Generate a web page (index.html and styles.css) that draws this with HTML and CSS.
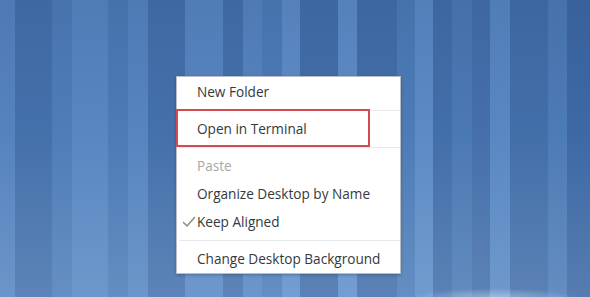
FILE: index.html
```html
<!DOCTYPE html>
<html>
<head>
<meta charset="utf-8">
<link rel="stylesheet" href="styles.css">
</head>
<body>
<div class="desktop">
  <div class="glow"></div>
  <div class="menu">
    <div class="item">New Folder</div>
    <div class="sep"></div>
    <div class="item">Open in Terminal</div>
    <div class="sep"></div>
    <div class="item disabled">Paste</div>
    <div class="item">Organize Desktop by Name</div>
    <div class="item"><svg class="check" width="14" height="12" viewBox="0 0 14 12"><path d="M1.5 6.5 L5 10 L12.5 1.5" fill="none" stroke="#8e8e8e" stroke-width="1.6" stroke-linecap="round" stroke-linejoin="round"/></svg>Keep Aligned</div>
    <div class="sep"></div>
    <div class="item">Change Desktop Background</div>
    <div class="highlight"></div>
  </div>
</div>
</body>
</html>
```
FILE: styles.css
```css
html, body {
  margin: 0;
  padding: 0;
}
body {
  width: 590px;
  height: 297px;
  overflow: hidden;
}
.desktop {
  position: relative;
  width: 590px;
  height: 297px;
  background:
    linear-gradient(to bottom, rgba(20,40,90,0.14) 0%, rgba(20,40,90,0.04) 45%, rgba(255,255,255,0.12) 100%),
    linear-gradient(to right,
      #5886c2 0px, #5886c2 15px,
      #4673ae 15px, #4673ae 52px,
      #5080bb 52px, #5080bb 72px,
      #5a8ac5 72px, #5a8ac5 108px,
      #4e7eb9 108px, #4e7eb9 128px,
      #5888c3 128px, #5888c3 148px,
      #4673ae 148px, #4673ae 185px,
      #5a8ac5 185px, #5a8ac5 223px,
      #4673ae 223px, #4673ae 243px,
      #5888c3 243px, #5888c3 262px,
      #4f7fba 262px, #4f7fba 282px,
      #6090cb 282px, #6090cb 300px,
      #4471ac 300px, #4471ac 338px,
      #6090cb 338px, #6090cb 357px,
      #4471ac 357px, #4471ac 397px,
      #4f7fba 397px, #4f7fba 415px,
      #5e8ec9 415px, #5e8ec9 433px,
      #4471ac 433px, #4471ac 452px,
      #4d7cb7 452px, #4d7cb7 472px,
      #4672ad 472px, #4672ad 490px,
      #5b8bc6 490px, #5b8bc6 510px,
      #4471ac 510px, #4471ac 548px,
      #4f7eb9 548px, #4f7eb9 567px,
      #3f6ba7 567px, #3f6ba7 590px);
}
.glow {
  position: absolute;
  left: 415px;
  top: 289px;
  width: 160px;
  height: 18px;
  border-radius: 50%;
  background: radial-gradient(ellipse at center, rgba(235,242,252,0.4) 0%, rgba(235,242,252,0.15) 50%, rgba(235,242,252,0) 75%);
}
.menu {
  position: absolute;
  left: 176px;
  top: 76px;
  width: 223px;
  padding: 1px 0 0;
  height: 195px;
  background: #ffffff;
  border: 1px solid #b9bfc6;
  box-shadow: 0 1px 3px rgba(0,0,0,0.25);
  font-family: "Open Sans", "DejaVu Sans", sans-serif;
  font-size: 13.6px;
  color: #34393b;
}
.item {
  position: relative;
  height: 28px;
  line-height: 28px;
  padding-left: 20px;
  white-space: nowrap;
}
.item.disabled {
  color: #a4a7a8;
}
.check {
  position: absolute;
  left: 5px;
  top: 8px;
}
.sep {
  height: 1px;
  margin: 4px 0 4px 2px;
  background: #e8e9ea;
}
.highlight {
  position: absolute;
  left: -1px;
  top: 32px;
  width: 190px;
  height: 34px;
  border: 2px solid #d24b4f;
}
```
